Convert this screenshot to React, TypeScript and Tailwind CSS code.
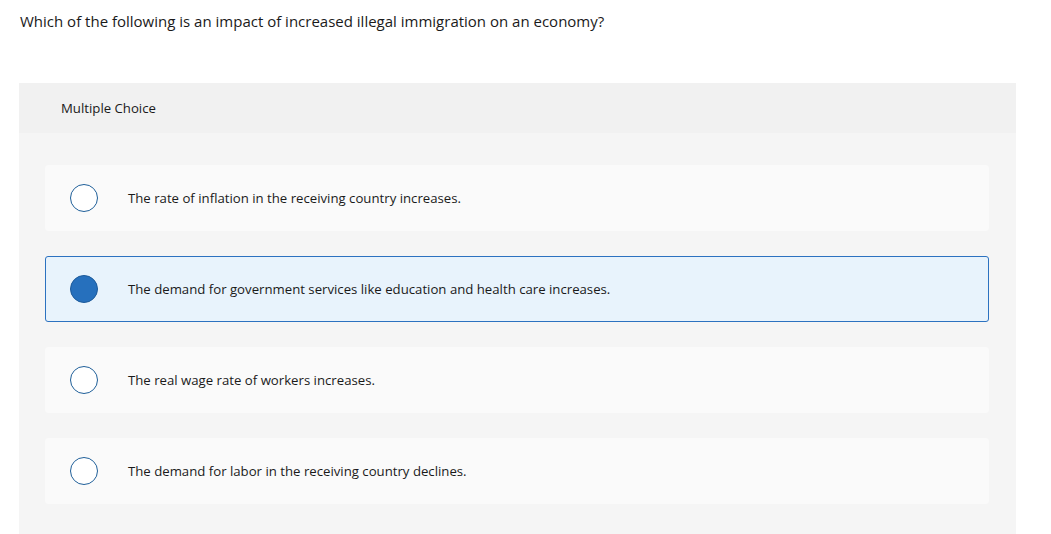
import React from "react";

const options = [
  "The rate of inflation in the receiving country increases.",
  "The demand for government services like education and health care increases.",
  "The real wage rate of workers increases.",
  "The demand for labor in the receiving country declines.",
];

export default function App() {
  const selected = 1;
  return (
    <div className="min-h-screen bg-white font-['Open_Sans','Liberation_Sans',sans-serif] text-[#1a1a1a]">
      <div className="px-5 pt-[11px]">
        <p className="text-[15px] leading-[20px]">
          Which of the following is an impact of increased illegal immigration on an economy?
        </p>
      </div>
      <div className="ml-[19px] mt-[52px] w-[997px] bg-[#f5f5f5]">
        <div className="flex h-[50px] items-center bg-[#f1f1f1] pl-[42px] pt-[1px] text-[13.2px]">
          Multiple Choice
        </div>
        <div className="flex flex-col gap-[25px] pb-[30px] pl-[26px] pr-[27px] pt-[32px]">
          {options.map((text, i) => {
            const isSel = i === selected;
            return (
              <div
                key={i}
                className={
                  isSel
                    ? "flex h-[66px] items-center rounded-[3px] border border-[#2c72c0] bg-[#e8f3fc] pl-[24px]"
                    : "flex h-[66px] items-center rounded-[4px] bg-[#fafafa] pl-[25px]"
                }
              >
                {isSel ? (
                  <span className="h-[28px] w-[28px] shrink-0 rounded-full border border-[#1c5a9a] bg-[#2670bd]" />
                ) : (
                  <span className="h-[28px] w-[28px] shrink-0 rounded-full border-[1.5px] border-[#1f5f99] bg-white" />
                )}
                <span className="ml-[30px] pt-[2px] text-[13.2px]">{text}</span>
              </div>
            );
          })}
        </div>
      </div>
    </div>
  );
}
